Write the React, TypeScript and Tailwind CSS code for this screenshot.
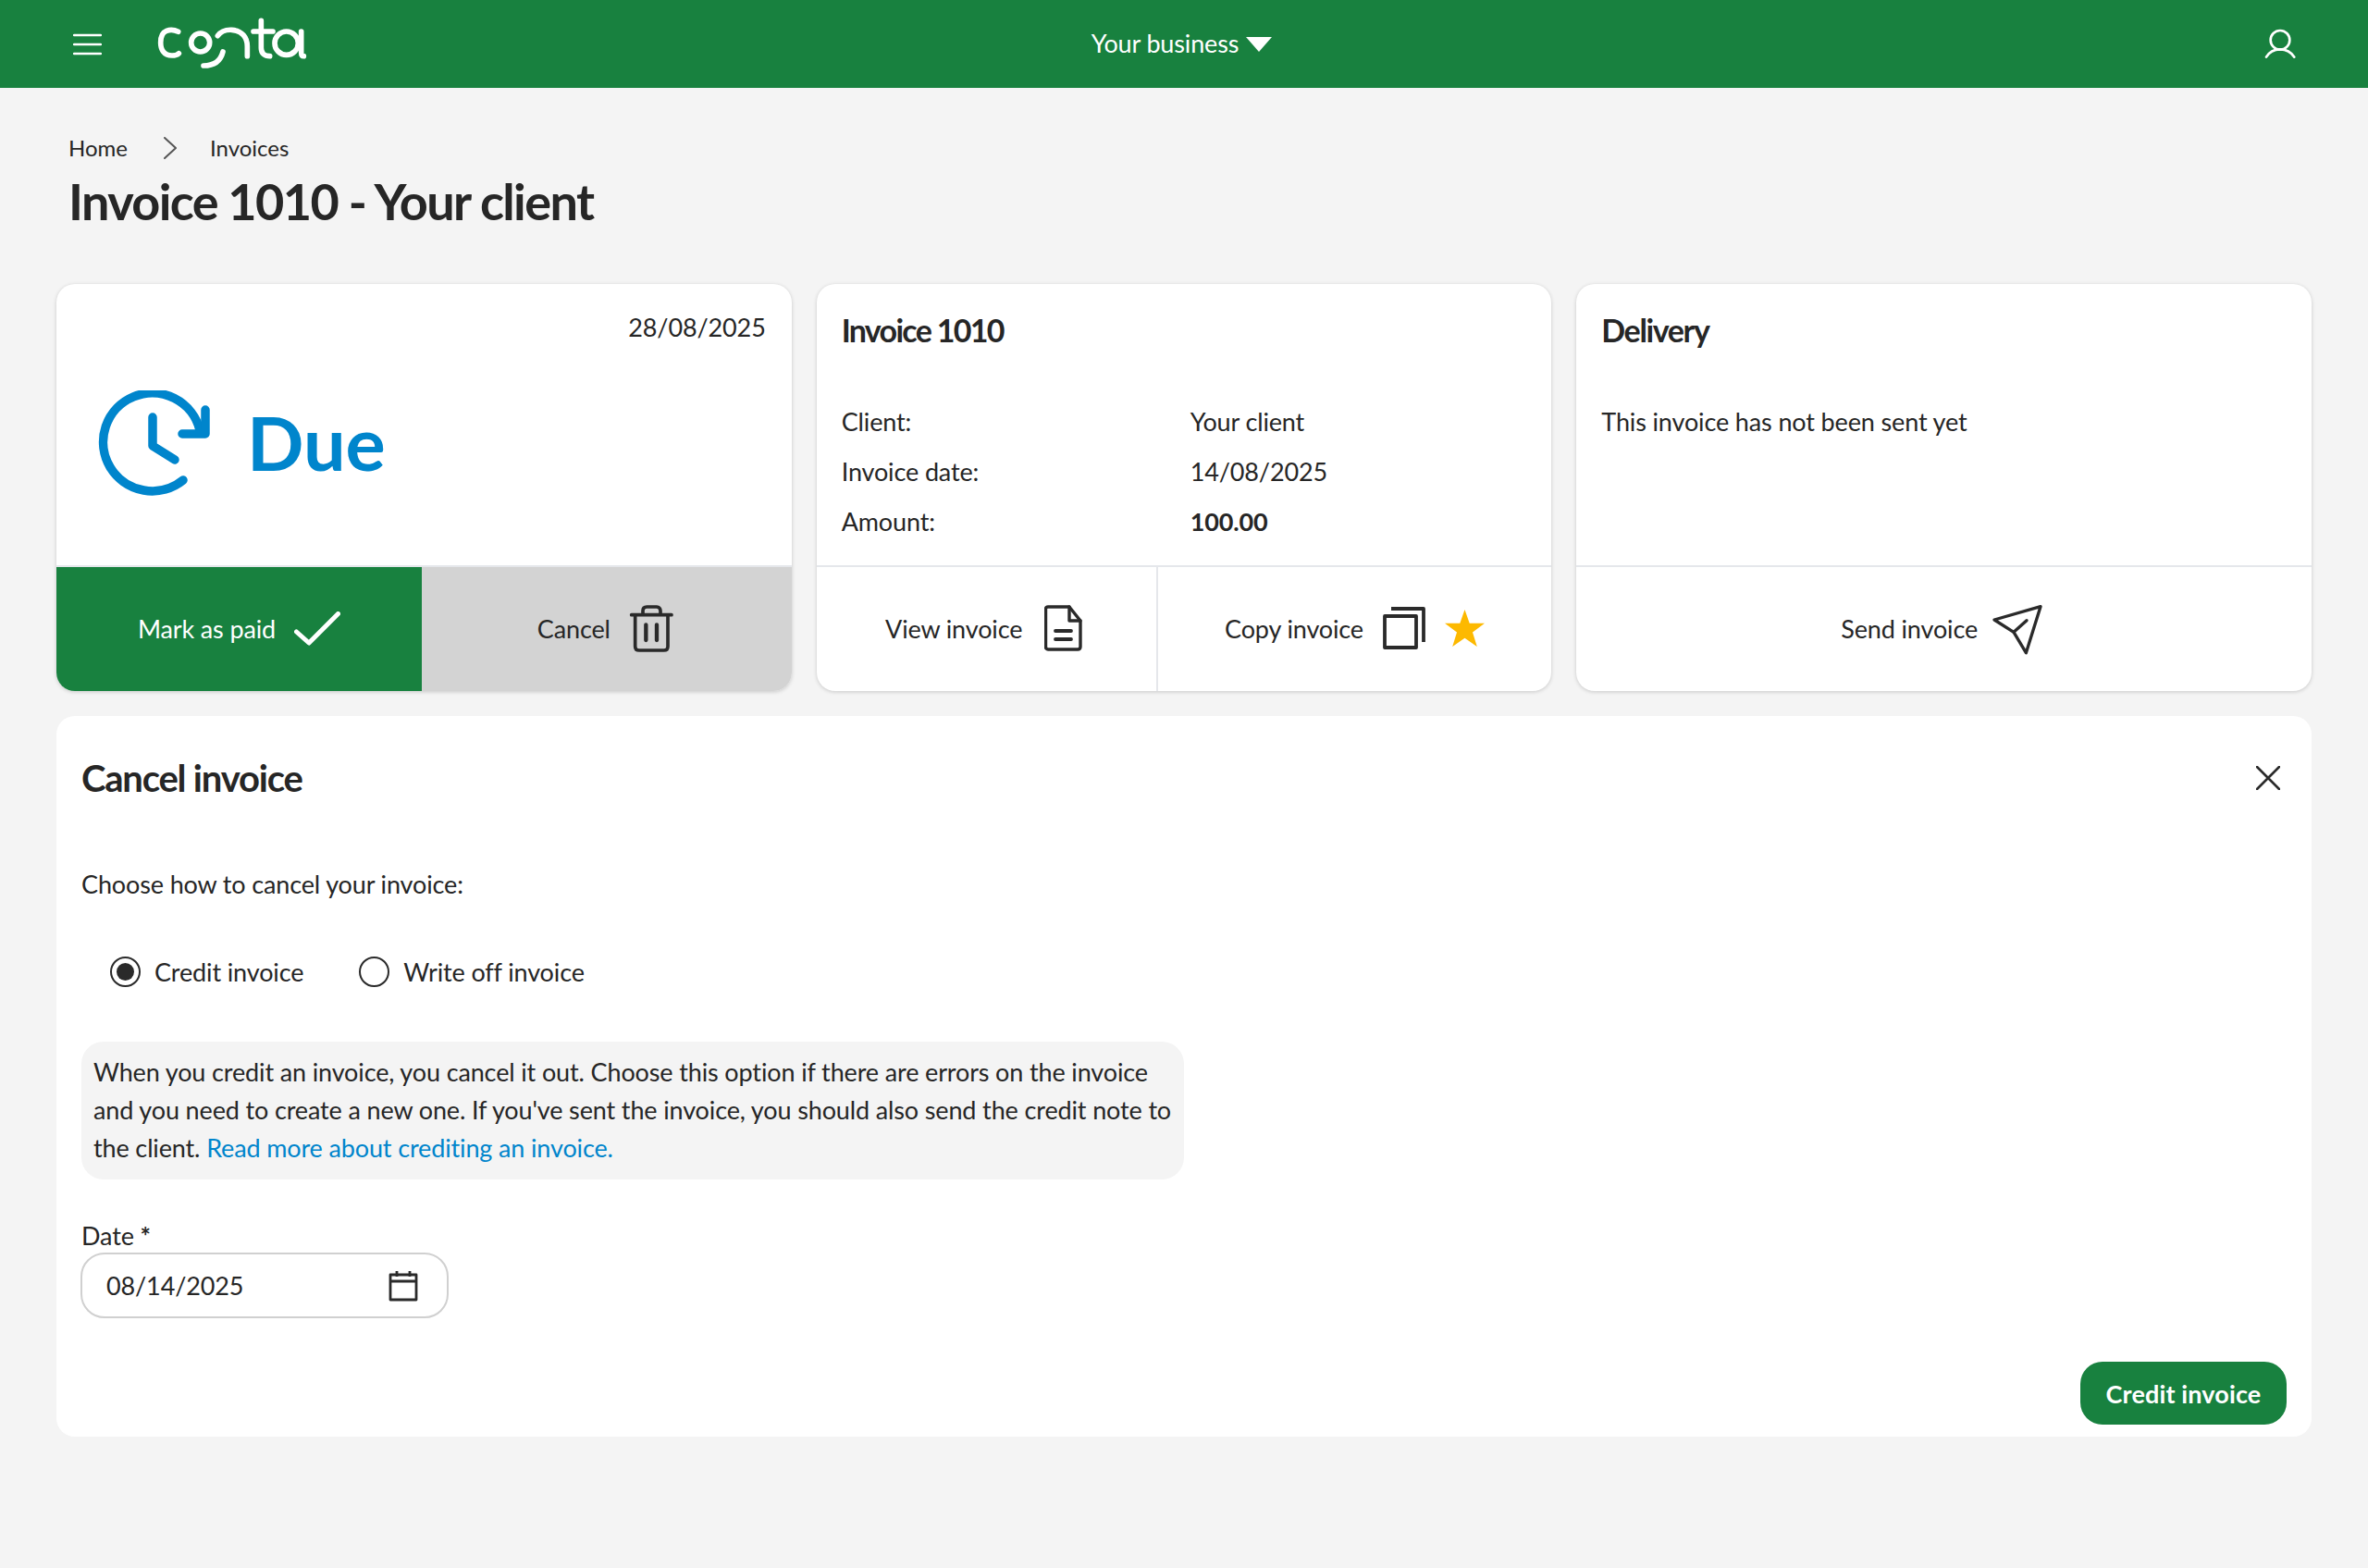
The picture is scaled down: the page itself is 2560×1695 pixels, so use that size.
function MenuIcon() {
  return (
    <svg width="31" height="24" viewBox="0 0 31 24" fill="none" stroke="white" strokeWidth="2.4" strokeLinecap="round">
      <path d="M1 2h29M1 12h29M1 22h29" />
    </svg>
  );
}

function Logo() {
  return (
    <svg width="180" height="75" viewBox="0 0 540 225" fill="none" stroke="white" strokeWidth="17" strokeLinecap="round" strokeLinejoin="round">
      <path d="M98 73C85 66 70 66 60 70C45 76 41 92 41 108C41 128 50 150 78 150C88 150 95 148 100 143" />
      <circle cx="170" cy="108" r="30" />
      <path d="M180 183C210 183 235 170 243 138" />
      <path d="M226 86C236 72 255 66 272 67C305 69 322 92 322 120V152" />
      <path d="M367 37V125C367 143 378 152 395 152M342 72H405" />
      <circle cx="449" cy="110" r="38" />
      <path d="M497 72V140C497 148 500 152 505 152" />
    </svg>
  );
}

function UserIcon() {
  return (
    <svg width="70" height="55" viewBox="0 0 210 165" fill="none" stroke="white" strokeWidth="8" strokeLinecap="round">
      <circle cx="105" cy="70" r="31" />
      <path d="M60 125C70 108 85 100 105 100C125 100 140 108 151 125" />
    </svg>
  );
}

function ChevronIcon() {
  return (
    <svg width="14" height="24" viewBox="0 0 14 24" fill="none" stroke="#555" strokeWidth="2" strokeLinecap="round" strokeLinejoin="round">
      <path d="M1 1l12 11L1 23" />
    </svg>
  );
}

function ClockIcon() {
  return (
    <svg width="122" height="118" viewBox="105 420 122 118" fill="none" stroke="#0085cc" strokeWidth="9.500" strokeLinecap="round" strokeLinejoin="round">
      <path d="M197 517A53 53 0 1 1 215 463" />
      <path d="M221 441V467H196" />
      <path d="M164 449V480L188 495" />
    </svg>
  );
}

function CheckIcon() {
  return (
    <svg width="50" height="37" viewBox="0 0 50 37" fill="none" stroke="white" strokeWidth="5" strokeLinecap="round" strokeLinejoin="round">
      <path d="M2.500 22L16 34L47.500 2.500" />
    </svg>
  );
}

function TrashIcon() {
  return (
    <svg width="90" height="75" viewBox="0 0 270 225" fill="none" stroke="#2a2a2a" strokeWidth="11" strokeLinecap="round" strokeLinejoin="round" className="-mx-[22px]">
      <path d="M68 68H198M105 62V55C105 47 110 42 118 42H150C157 42 162 47 162 55V62" />
      <path d="M80 70V170C80 178 85 183 93 183H173C181 183 186 178 186 170V70" />
      <path d="M115 100V150M150 100V150" strokeWidth="13" />
    </svg>
  );
}

function DocIcon() {
  return (
    <svg width="41" height="50" viewBox="0 0 41 50" fill="none" stroke="#2a2a2a" strokeWidth="3.400" strokeLinecap="round" strokeLinejoin="round">
      <path d="M4 2H27L39 17V45C39 47 38 48 36 48H4C2.500 48 1.500 47 1.500 45V4C1.500 3 2.500 2 4 2Z" />
      <path d="M27 2V17H39" />
      <path d="M12 28H29M12 37H29" strokeWidth="3.800" />
    </svg>
  );
}

function CopyIcon() {
  return (
    <svg width="46" height="46" viewBox="0 0 46 46" fill="none" stroke="#2a2a2a" strokeWidth="3.800" strokeLinejoin="round">
      <path d="M2 10H36V44H2Z" />
      <path d="M9 2H44V38" />
    </svg>
  );
}

function StarIcon() {
  return (
    <svg width="43" height="40" viewBox="0 0 43 40" fill="#fdb900">
      <path d="M21.500 0L26.700 14.800H43L30 24.600L34.800 40L21.500 30.700L8.200 40L13 24.600L0 14.800H16.300Z" />
    </svg>
  );
}

function SendIcon() {
  return (
    <svg width="80" height="70" viewBox="0 0 240 210" fill="none" stroke="#2a2a2a" strokeWidth="10" strokeLinecap="round" strokeLinejoin="round" className="-mx-[13px]">
      <path d="M45 78L195 35L148 185L108 118Z" />
      <path d="M108 118L150 80" />
    </svg>
  );
}

function CloseIcon() {
  return (
    <svg width="26" height="26" viewBox="0 0 26 26" fill="none" stroke="#2a2a2a" strokeWidth="2.600" strokeLinecap="round">
      <path d="M1 1L25 25M25 1L1 25" />
    </svg>
  );
}

function CalendarIcon() {
  return (
    <svg width="32" height="34" viewBox="0 0 32 34" fill="none" stroke="#2a2a2a" strokeWidth="2.800" strokeLinejoin="round">
      <path d="M2 5H30V32H2Z" />
      <path d="M2 12H30M9 1V7M23 1V7" />
    </svg>
  );
}

function Radio({ checked, label }: { checked?: boolean; label: string }) {
  return (
    <label className="flex items-center gap-[15px]">
      <span className="flex h-[33px] w-[33px] items-center justify-center rounded-full border-[2.5px] border-[#2a2a2a]">
        {checked && <span className="h-[19px] w-[19px] rounded-full bg-[#2a2a2a]" />}
      </span>
      {label}
    </label>
  );
}

function Card({ children, actions }: { children: React.ReactNode; actions: React.ReactNode }) {
  return (
    <div className="flex h-[440px] flex-col overflow-hidden rounded-[20px] bg-white shadow-[0_1px_4px_rgba(0,0,0,0.18)]">
      <div className="h-[306px] border-b-2 border-[#e5e7eb]">{children}</div>
      <div className="flex flex-1">{actions}</div>
    </div>
  );
}

export default function App() {
  return (
    <div className="min-h-[1695px] bg-[#f4f4f4] font-['Lato',sans-serif] text-[27px] leading-[41px] tracking-[-0.005em] text-[#262626]">
      <header className="grid h-[95px] grid-cols-3 items-center bg-[#18813f] pl-[79px] pr-[79px] text-white">
        <div className="flex items-center">
          <MenuIcon />
          <div className="ml-[50px]">
            <Logo />
          </div>
        </div>
        <div className="-mt-[2px] flex items-center justify-center gap-[8px] pr-[5px]">
          <span>Your business</span>
          <span className="mt-[2px] h-0 w-0 border-x-[14px] border-t-[16px] border-x-transparent border-t-white" />
        </div>
        <div className="flex justify-end">
          <div className="-mr-[19px]">
            <UserIcon />
          </div>
        </div>
      </header>

      <main className="px-[61px]">
        <nav className="flex items-center pl-[13px] pt-[44px] text-[24px] tracking-normal">
          <span>Home</span>
          <span className="ml-[39px]">
            <ChevronIcon />
          </span>
          <span className="ml-[36px]">Invoices</span>
        </nav>
        <h1 className="pl-[13px] pt-[8px] text-[54px] font-bold leading-[60px] tracking-[-0.03em]">Invoice 1010 - Your client</h1>

        <div className="mt-[59px] grid grid-cols-3 gap-[27px]">
          <Card
            actions={
              <>
                <button className="flex w-[395px] items-center justify-center gap-[20px] bg-[#18813f] pb-[2px] text-white">
                  Mark as paid
                  <CheckIcon />
                </button>
                <button className="flex flex-1 items-center justify-center gap-[22px] bg-[#d3d3d3] pb-[2px] pr-[3px]">
                  Cancel
                  <TrashIcon />
                </button>
              </>
            }
          >
            <div className="flex flex-col px-[28px] pt-[26px]">
              <div className="text-right">28/08/2025</div>
              <div className="mt-[48px] flex items-center gap-[39px] pl-[17px]">
                <ClockIcon />
                <span className="-mt-[6px] text-[81px] font-bold leading-[100px] text-[#0085cc]">Due</span>
              </div>
            </div>
          </Card>

          <Card
            actions={
              <>
                <button className="flex w-[369px] items-center justify-center gap-[24px] border-r-2 border-[#e5e7eb] pb-[2px] pr-[5px]">
                  View invoice
                  <DocIcon />
                </button>
                <button className="flex flex-1 items-center justify-center gap-[21px] pb-[2px]">
                  Copy invoice
                  <CopyIcon />
                  <StarIcon />
                </button>
              </>
            }
          >
            <div className="px-[27px] pt-[30px]">
              <h2 className="text-[34px] font-bold leading-[40px] tracking-[-0.05em]">Invoice 1010</h2>
              <dl className="mt-[58px] grid grid-cols-[377px_1fr] gap-y-[13px]">
                <dt>Client:</dt>
                <dd>Your client</dd>
                <dt>Invoice date:</dt>
                <dd>14/08/2025</dd>
                <dt>Amount:</dt>
                <dd className="font-bold">100.00</dd>
              </dl>
            </div>
          </Card>

          <Card
            actions={
              <button className="flex flex-1 items-center justify-center gap-[16px] pb-[2px] pr-[5px]">
                Send invoice
                <SendIcon />
              </button>
            }
          >
            <div className="px-[27px] pt-[30px]">
              <h2 className="text-[34px] font-bold leading-[40px] tracking-[-0.04em]">Delivery</h2>
              <p className="mt-[58px]">This invoice has not been sent yet</p>
            </div>
          </Card>
        </div>

        <section className="mt-[27px] flex h-[779px] flex-col rounded-[20px] bg-white px-[27px] pt-[47px]">
          <div className="flex items-center justify-between pr-[7px]">
            <h2 className="text-[40px] font-bold leading-[40px] tracking-[-0.03em]">Cancel invoice</h2>
            <CloseIcon />
          </div>
          <p className="mt-[74px]">Choose how to cancel your invoice:</p>
          <div className="mt-[54px] flex gap-[60px] pl-[31px]">
            <Radio checked label="Credit invoice" />
            <Radio label="Write off invoice" />
          </div>
          <div className="mt-[55px] w-[1192px] rounded-[24px] bg-[#f4f4f4] px-[13px] pb-[14px] pt-[12px]">
            When you credit an invoice, you cancel it out. Choose this option if there are errors on the invoice and you need to create a new one. If you've sent the invoice, you should also send the credit note to the client.{" "}
            <a className="text-[#0085cc]">Read more about crediting an invoice.</a>
          </div>
          <label className="mt-[40px] block">
            Date <span className="font-bold">*</span>
          </label>
          <div className="-ml-[1px] -mt-[2px] flex h-[71px] w-[398px] items-center justify-between rounded-[26px] border-2 border-[#d0d0d0] bg-white pl-[26px] pr-[31px]">
            <span>08/14/2025</span>
            <CalendarIcon />
          </div>
          <div className="mt-[47px] flex justify-end">
            <button className="h-[68px] w-[223px] rounded-[24px] bg-[#18813f] font-bold tracking-[0.005em] text-white">Credit invoice</button>
          </div>
        </section>
      </main>
    </div>
  );
}
